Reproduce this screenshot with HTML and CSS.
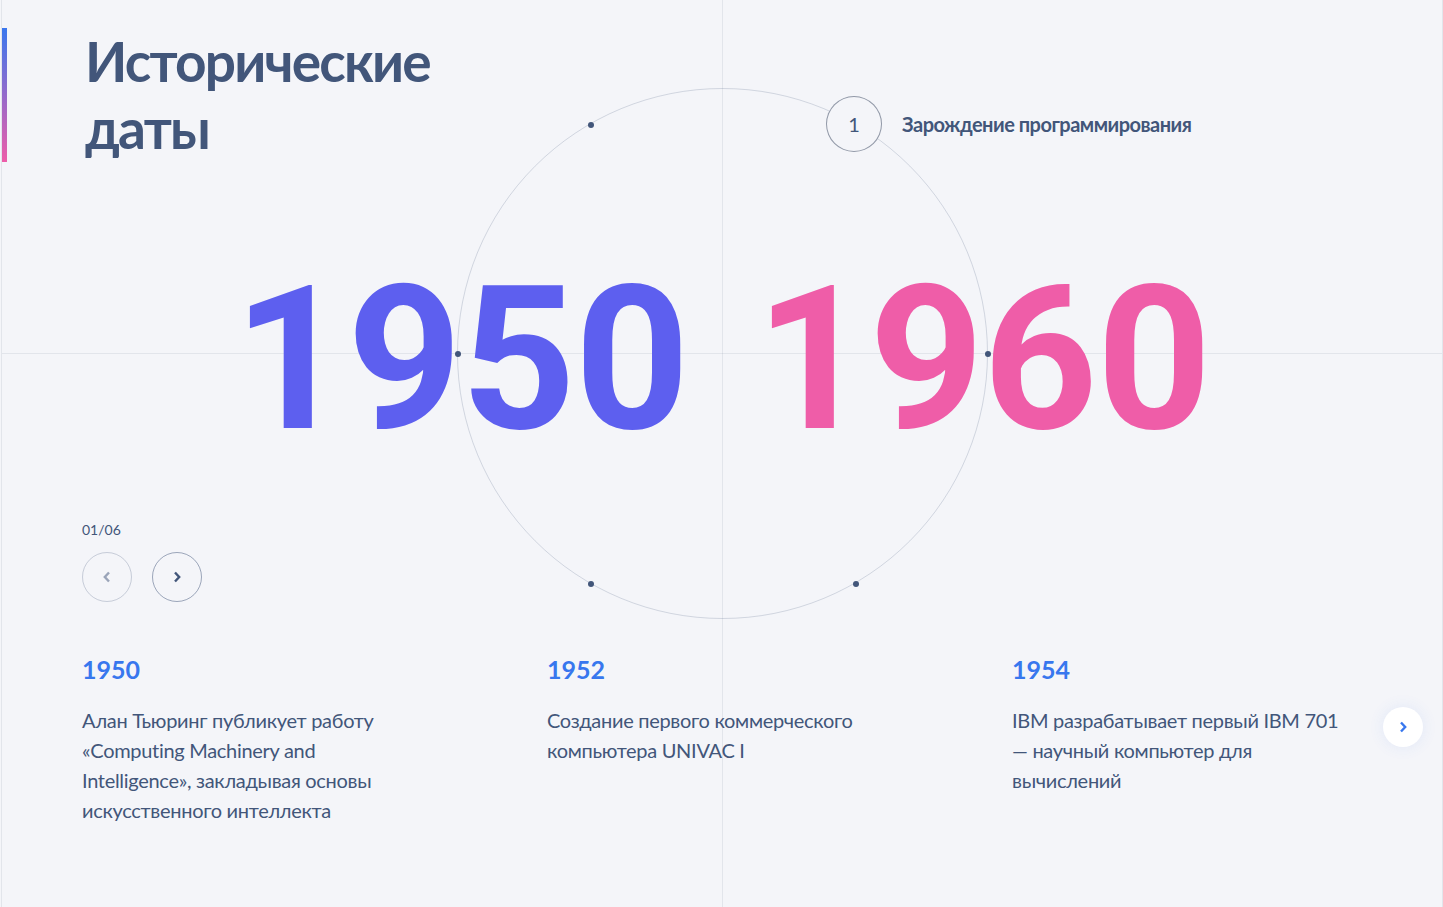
FILE: index.html
```html
<!DOCTYPE html>
<html lang="ru">
<head>
<meta charset="utf-8">
<title>Исторические даты</title>
<link rel="stylesheet" href="styles.css">
</head>
<body>
<main class="page">
  <div class="orbit">
    <span class="dot dot-1"></span>
    <div class="active">
      <span class="active-num">1</span>
      <span class="active-label">Зарождение программирования</span>
    </div>
    <span class="dot dot-3"></span>
    <span class="dot dot-4"></span>
    <span class="dot dot-5"></span>
    <span class="dot dot-6"></span>
  </div>

  <h1 class="title">Исторические<br>даты</h1>

  <div class="years">
    <span class="year year-start">1950</span>
    <span class="year year-end">1960</span>
  </div>

  <div class="nav">
    <div class="counter">01/06</div>
    <div class="nav-buttons">
      <button class="nav-btn disabled" aria-label="Назад">
        <svg width="10" height="14" viewBox="0 0 10 14"><polyline points="7,2.5 2.8,7 7,11.5" fill="none" stroke="#42567A" stroke-width="2.4"/></svg>
      </button>
      <button class="nav-btn" aria-label="Вперёд">
        <svg width="10" height="14" viewBox="0 0 10 14"><polyline points="3,2.5 7.2,7 3,11.5" fill="none" stroke="#42567A" stroke-width="2.4"/></svg>
      </button>
    </div>
  </div>

  <div class="slider">
    <article class="event">
      <h3 class="event-year">1950</h3>
      <p class="event-text">Алан Тьюринг публикует работу «Computing Machinery and Intelligence», закладывая основы искусственного интеллекта</p>
    </article>
    <article class="event">
      <h3 class="event-year">1952</h3>
      <p class="event-text">Создание первого коммерческого компьютера UNIVAC I</p>
    </article>
    <article class="event">
      <h3 class="event-year">1954</h3>
      <p class="event-text">IBM разрабатывает первый IBM 701 — научный компьютер для вычислений</p>
    </article>
    <button class="slide-next" aria-label="Следующий">
      <svg width="10" height="14" viewBox="0 0 10 14"><polyline points="3,2.5 7.2,7 3,11.5" fill="none" stroke="#3877EE" stroke-width="2.4"/></svg>
    </button>
  </div>
</main>
</body>
</html>
```

FILE: styles.css
```css
* { box-sizing: border-box; }
html, body { margin: 0; padding: 0; }
body {
  background: #F4F5F9;
  font-family: Lato, Roboto, "Noto Sans", "Liberation Sans", sans-serif;
  color: #42567A;
}
.page {
  position: relative;
  width: 1442px;
  min-height: 907px;
  margin-left: 1px;
  border-left: 1px solid rgba(66, 86, 122, 0.1);
  border-right: 1px solid rgba(66, 86, 122, 0.1);
  padding-top: 28px;
  overflow: hidden;
}
.page::before {
  content: "";
  position: absolute;
  left: 720px;
  top: 0;
  bottom: 0;
  width: 1px;
  background: rgba(66, 86, 122, 0.1);
}
.page::after {
  content: "";
  position: absolute;
  left: 0;
  right: 0;
  top: 353px;
  height: 1px;
  background: rgba(66, 86, 122, 0.1);
}
.orbit {
  position: absolute;
  left: 455px;
  top: 88px;
  width: 531px;
  height: 531px;
  border: 1px solid rgba(66, 86, 122, 0.2);
  border-radius: 50%;
  z-index: 2;
}
.dot {
  position: absolute;
  width: 6px;
  height: 6px;
  border-radius: 50%;
  background: #42567A;
  transform: translate(-50%, -50%);
}
.dot-1 { left: 132.5px; top: 35.5px; }
.dot-3 { left: 530px; top: 265px; }
.dot-4 { left: 397.5px; top: 494.5px; }
.dot-5 { left: 132.5px; top: 494.5px; }
.dot-6 { left: 0px; top: 265px; }
.active {
  position: absolute;
  left: 368px;
  top: 7px;
  display: flex;
  align-items: center;
  gap: 20px;
}
.active-num {
  width: 56px;
  height: 56px;
  border-radius: 50%;
  border: 1px solid rgba(48, 62, 88, 0.5);
  background: #F4F5F9;
  display: flex;
  align-items: center;
  justify-content: center;
  font-size: 20px;
  color: #42567A;
}
.active-label {
  font-size: 20px;
  font-weight: 700;
  letter-spacing: -0.5px;
  white-space: nowrap;
}
.title {
  margin: 0;
  padding-left: 78px;
  border-left: 5px solid;
  border-image: linear-gradient(180deg, #3877EE, #EF5DA8) 1;
  font-size: 55px;
  line-height: 67px;
  font-weight: 700;
  letter-spacing: -1.8px;
  color: #42567A;
}
.years {
  margin-top: 98px;
  display: flex;
  justify-content: center;
  gap: 67px;
  font-family: Roboto, "Noto Sans", sans-serif;
  font-size: 200px;
  line-height: 200px;
  font-weight: 700;
  letter-spacing: -1px;
  position: relative;
  z-index: 1;
}
.year-start { color: #5D5FEF; }
.year-end { color: #EF5DA8; }
.nav {
  margin-top: 61px;
  padding-left: 80px;
}
.counter {
  font-size: 14px;
  line-height: 18px;
}
.nav-buttons {
  margin-top: 13px;
  display: flex;
  gap: 20px;
}
.nav-btn {
  width: 50px;
  height: 50px;
  border-radius: 50%;
  border: 1px solid rgba(66, 86, 122, 0.5);
  background: transparent;
  padding: 0;
  display: flex;
  align-items: center;
  justify-content: center;
}
.nav-btn.disabled { opacity: 0.5; }
.slider {
  position: relative;
  margin-top: 52px;
  padding-left: 80px;
  display: flex;
  gap: 125px;
}
.event { width: 340px; }
.event-year {
  margin: 0;
  font-size: 25px;
  line-height: 30px;
  font-weight: 700;
  color: #3877EE;
}
.event-text {
  margin: 21px 0 0;
  font-size: 20px;
  line-height: 30px;
  letter-spacing: -0.3px;
  color: #42567A;
}
.slide-next {
  position: absolute;
  right: 19px;
  top: 53px;
  width: 40px;
  height: 40px;
  border-radius: 50%;
  border: none;
  background: #fff;
  box-shadow: 0 0 15px rgba(56, 119, 238, 0.1);
  padding: 0;
  display: flex;
  align-items: center;
  justify-content: center;
}
```
